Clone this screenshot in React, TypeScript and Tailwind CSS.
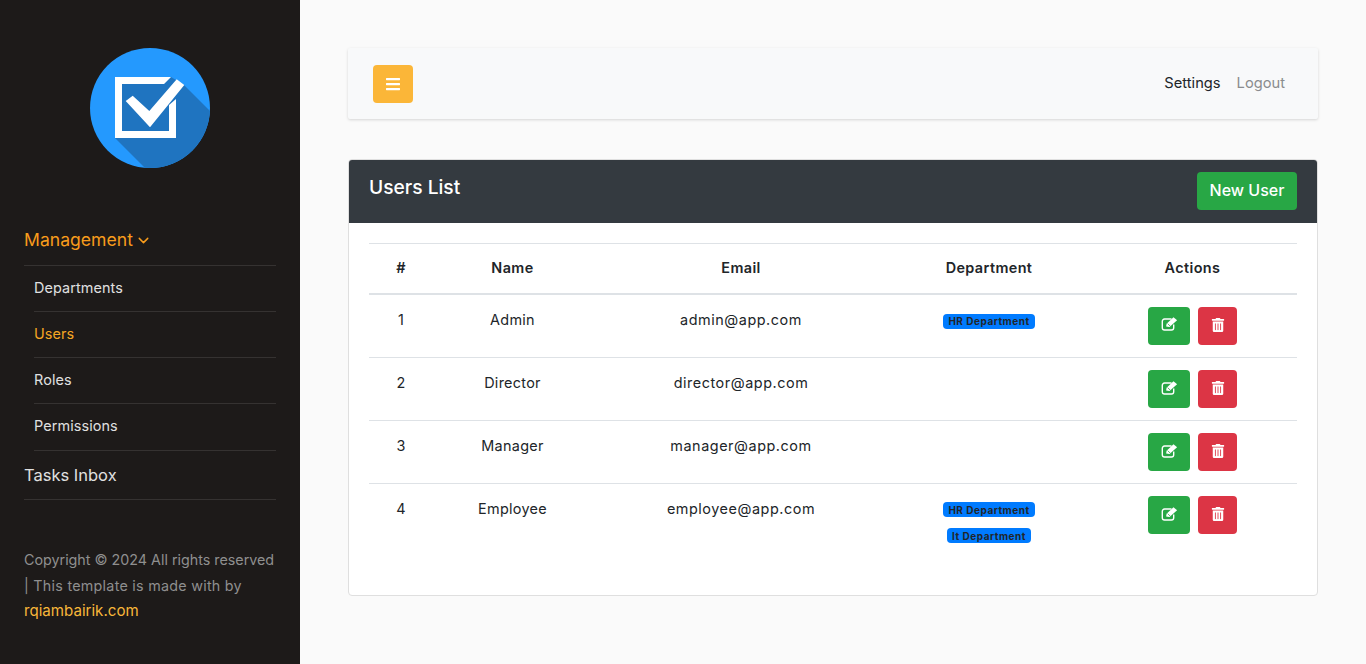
import { ChevronDown } from "lucide-react";
import { FaBars, FaTrashAlt } from "react-icons/fa";

const rows = [
  { id: 1, name: "Admin", email: "admin@app.com", depts: ["HR Department"] },
  { id: 2, name: "Director", email: "director@app.com", depts: [] as string[] },
  { id: 3, name: "Manager", email: "manager@app.com", depts: [] as string[] },
  { id: 4, name: "Employee", email: "employee@app.com", depts: ["HR Department", "It Department"] },
];

function Logo() {
  return (
    <svg width="120" height="120" viewBox="90 48 120 120">
      <defs>
        <clipPath id="logo-clip">
          <circle cx="150" cy="108" r="60" />
        </clipPath>
      </defs>
      <circle cx="150" cy="108" r="60" fill="#2499fe" />
      <polygon points="115,138 115,77 171,77 184,85 284,185 215,238" fill="#1f74c0" clipPath="url(#logo-clip)" />
      <path d="M115 77H171L164 84H122V131H169V105L176 99V138H115Z" fill="#fff" />
      <polygon points="125.7,101 132.7,95.7 149.3,111 176.7,79.3 184.3,85 150,127.3" fill="#fff" />
    </svg>
  );
}

function EditIcon() {
  return (
    <svg width="17" height="14" viewBox="0 0 16 14" className="mb-[3px]">
      <path d="M10 2H3A2.2 2.2 0 0 0 .8 4.2V10.8A2.2 2.2 0 0 0 3 13H10A2.2 2.2 0 0 0 12.2 10.8V7.5" fill="none" stroke="#fff" strokeWidth="1.4" />
      <polygon points="4.6,9.4 5.1,6.7 12,0.3 15.6,3.3 8,10" fill="#fff" />
      <path d="M6.2 6.6 L8.6 9" stroke="#28a745" strokeWidth="0.8" />
    </svg>
  );
}

function SubItem({ label, active, last }: { label: string; active?: boolean; last?: boolean }) {
  return (
    <li
      className={`ml-[10px] ${last ? "h-[47px]" : "h-[46px]"} pb-[2px] border-b border-[#353231] flex items-center text-[14.4px] tracking-[0.1px] ${active ? "text-[#f5a623]" : "text-[#e0e0e0]"}`}
    >
      {label}
    </li>
  );
}

function Sidebar() {
  return (
    <aside className="w-[300px] shrink-0 bg-[#1d1a19] px-6 pt-12 h-[664px] flex flex-col">
      <div className="flex justify-center h-[120px] shrink-0">
        <Logo />
      </div>
      <nav className="mt-[46px]">
        <ul className="w-[252px]">
          <li className="h-[52px] border-b border-[#353231] flex items-center gap-[2px] text-[17.6px] text-[#f89c1c] pt-[1px]">
            Management
            <ChevronDown size={17} strokeWidth={2} />
          </li>
          <SubItem label="Departments" />
          <SubItem label="Users" active />
          <SubItem label="Roles" />
          <SubItem label="Permissions" last />
          <li className="h-[49px] border-b border-[#353231] flex items-center text-[16.5px] text-[#e0e0e0]">Tasks Inbox</li>
        </ul>
      </nav>
      <p className="mt-[47px] text-[14.3px] leading-[25.6px] text-[#8f8f8f] w-[252px]">
        Copyright © 2024 All rights reserved <span className="tracking-[0.27px]">| This template is made with by</span> <span className="text-[#f8b739] text-[15.1px]">rqiambairik.com</span>
      </p>
    </aside>
  );
}

function Navbar() {
  return (
    <header className="h-[71px] bg-[#f8f9fa] shadow-[0_1px_3px_rgba(0,0,0,0.15)] flex items-center justify-between pl-[25px] pr-[33px] rounded-[2px]">
      <button className="w-10 h-[38px] rounded bg-[#fbb638] flex items-center justify-center text-white">
        <FaBars size={16} />
      </button>
      <div className="flex items-center gap-4 text-[14.7px]">
        <span className="text-[#212529]">Settings</span>
        <span className="text-[#8a8c8e]">Logout</span>
      </div>
    </header>
  );
}

function Badge({ label }: { label: string }) {
  return (
    <span className="inline-block bg-[#007bff] text-[#212529] text-[10px] leading-none font-bold rounded-[4px] px-[5px] py-[2.5px] whitespace-nowrap tracking-[0.5px]">
      {label}
    </span>
  );
}

function UsersTable() {
  return (
    <table className="w-full table-fixed border-collapse text-center text-[14.4px] text-[#212529]">
      <colgroup>
        <col className="w-[64px]" />
        <col className="w-[159px]" />
        <col className="w-[298px]" />
        <col className="w-[198px]" />
        <col className="w-[209px]" />
      </colgroup>
      <thead>
        <tr className="h-[50px] border-t border-b-2 border-t-[#dee2e6] border-b-[#dee2e6] tracking-[0.4px]">
          <th className="font-semibold pb-[1px]">#</th>
          <th className="font-semibold pb-[1px]">Name</th>
          <th className="font-semibold pb-[1px]">Email</th>
          <th className="font-semibold pb-[1px]">Department</th>
          <th className="font-semibold pb-[1px]">Actions</th>
        </tr>
      </thead>
      <tbody>
        {rows.map((r, i) => (
          <tr
            key={r.id}
            className={`align-top ${i === 0 ? "h-[64px] border-b border-[#dee2e6]" : i < rows.length - 1 ? "h-[63px] border-b border-[#dee2e6]" : "h-[73px]"}`}
          >
            <td className="pt-[14px]">{r.id}</td>
            <td className="pt-[14px] tracking-[0.3px]">{r.name}</td>
            <td className="pt-[14px] tracking-[0.55px]">{r.email}</td>
            <td className={i === 0 ? "pt-[19px]" : "pt-[18px]"}>
              <div className="flex flex-col items-center gap-[11px]">
                {r.depts.map((d) => (
                  <Badge key={d} label={d} />
                ))}
              </div>
            </td>
            <td className="pt-[12px]">
              <div className="flex justify-center gap-2">
                <button className="w-[42px] h-[38px] rounded bg-[#28a745] text-white flex items-center justify-center">
                  <EditIcon />
                </button>
                <button className="w-[39px] h-[38px] rounded bg-[#dc3545] text-white flex items-center justify-center">
                  <FaTrashAlt size={14} className="mb-[2px]" />
                </button>
              </div>
            </td>
          </tr>
        ))}
      </tbody>
    </table>
  );
}

export default function App() {
  return (
    <div className="flex h-[664px] overflow-hidden bg-[#fafafa] font-['Inter','Liberation_Sans',sans-serif]">
      <Sidebar />
      <main className="flex-1 px-12 pt-12">
        <Navbar />
        <section className="mt-[40px] h-[437px] bg-white border border-[#dfdfdf] rounded">
          <div className="h-[63px] bg-[#343a40] rounded-t-[3px] flex items-start justify-between px-5 pt-3">
            <h2 className="text-[19.2px] leading-[30px] font-medium text-white">Users List</h2>
            <button className="w-[100px] h-[38px] rounded bg-[#28a745] text-white text-[16px] font-medium pb-[2px]">New User</button>
          </div>
          <div className="px-5 pt-5">
            <UsersTable />
          </div>
        </section>
      </main>
    </div>
  );
}
